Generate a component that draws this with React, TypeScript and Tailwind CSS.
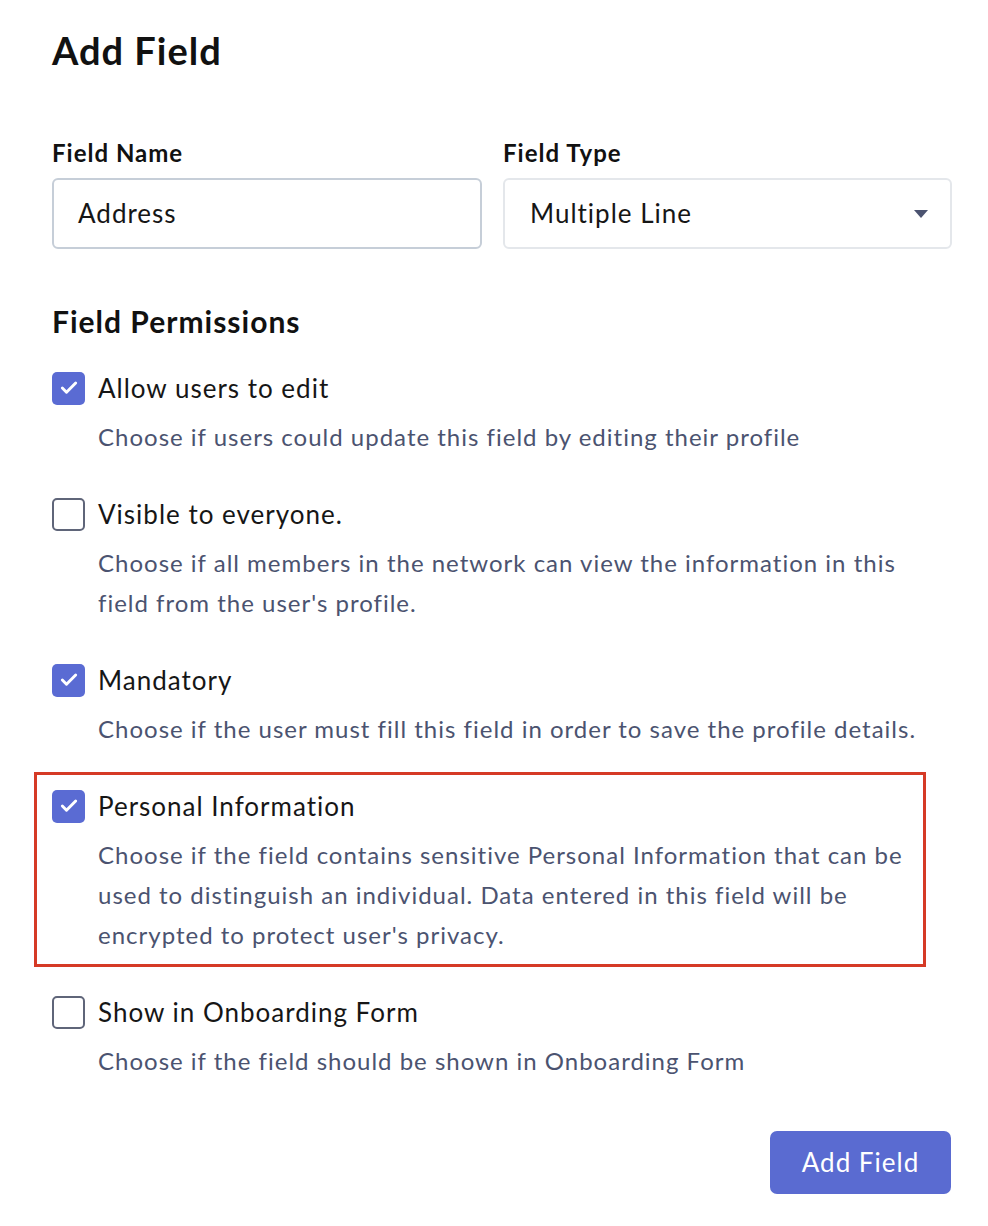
import { Check } from 'lucide-react';

const PERMISSIONS = [
    { label: 'Allow users to edit', desc: 'Choose if users could update this field by editing their profile', checked: true },
    { label: 'Visible to everyone.', desc: "Choose if all members in the network can view the information in this field from the user's profile.", checked: false },
    { label: 'Mandatory', desc: 'Choose if the user must fill this field in order to save the profile details.', checked: true },
    {
        label: 'Personal Information',
        desc: "Choose if the field contains sensitive Personal Information that can be used to distinguish an individual. Data entered in this field will be encrypted to protect user's privacy.",
        checked: true,
        highlight: true,
    },
    { label: 'Show in Onboarding Form', desc: 'Choose if the field should be shown in Onboarding Form', checked: false },
];

function Box({ checked }: { checked: boolean }) {
    if (checked) {
        return (
            <div className="w-[33px] h-[33px] rounded-[5px] bg-[#5a6bd3] flex items-center justify-center shrink-0">
                <Check className="w-[20px] h-[20px] text-white" strokeWidth={3.5} />
            </div>
        );
    }
    return <div className="w-[33px] h-[33px] rounded-[5px] border-2 border-[#5f6579] bg-white shrink-0" />;
}

function Item({ label, desc, checked }: { label: string; desc: string; checked: boolean }) {
    return (
        <div>
            <div className="flex items-center gap-[13px] h-[36px]">
                <Box checked={checked} />
                <span className="text-[26px] leading-[36px] text-[#161616]">{label}</span>
            </div>
            <p className="mt-[11px] pl-[46px] text-[24px] leading-[40px] text-[#4b5370]">{desc}</p>
        </div>
    );
}

export default function App() {
    return (
        <div
            className="bg-white min-h-[1226px] pl-[52px] pr-[37px] pt-[27px] tracking-[1px] [font-variant-ligatures:none]"
            style={{ fontFamily: 'Lato, "Open Sans", sans-serif' }}
        >
            <h1 className="text-[38px] leading-[46px] font-bold text-[#111]">Add Field</h1>

            <div className="mt-[65px] grid grid-cols-[430px_449px] gap-x-[21px]">
                <div>
                    <label className="block text-[24px] leading-[30px] font-bold text-[#111]">Field Name</label>
                    <div className="mt-[10px] h-[71px] rounded-[6px] border-2 border-[#c6ced8] flex items-center pl-[24px] text-[26px] text-[#161616]">
                        Address
                    </div>
                </div>
                <div>
                    <label className="block text-[24px] leading-[30px] font-bold text-[#111]">Field Type</label>
                    <div className="mt-[10px] h-[71px] rounded-[6px] border-2 border-[#e4e7eb] flex items-center justify-between pl-[25px] pr-[22px] text-[26px] text-[#161616]">
                        <span>Multiple Line</span>
                        <svg width="14" height="8" viewBox="0 0 14 8">
                            <path d="M0 0h14L7 8z" fill="#4b5370" />
                        </svg>
                    </div>
                </div>
            </div>

            <h2 className="mt-[54px] text-[30px] leading-[36px] font-bold text-[#111]">Field Permissions</h2>

            <div className="mt-[31px] flex flex-col gap-[39px]">
                {PERMISSIONS.map((p) =>
                    p.highlight ? (
                        <div key={p.label} className="-ml-[18px] -mt-[16px] -mb-[12px] w-[892px] border-[3px] border-[#d53a26] pl-[15px] pt-[13px] pb-[9px]">
                            <Item label={p.label} desc={p.desc} checked={p.checked} />
                        </div>
                    ) : (
                        <Item key={p.label} label={p.label} desc={p.desc} checked={p.checked} />
                    )
                )}
            </div>

            <div className="mt-[50px] flex justify-end">
                <button className="w-[181px] h-[63px] rounded-[7px] bg-[#5a6bd1] text-white text-[26px]">Add Field</button>
            </div>
        </div>
    );
}
